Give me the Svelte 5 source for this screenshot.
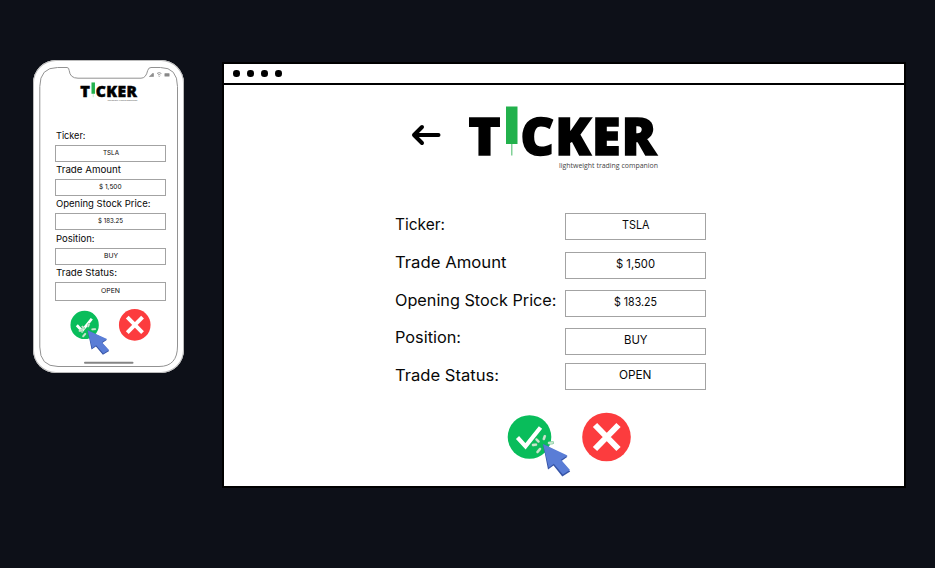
<script>
  const fields = [
    { label: 'Ticker:', value: 'TSLA', w: 50, mw: 29.5, vw: 27.5, mvw: 16, gap: 0, mh: 17 },
    { label: 'Trade Amount', value: '$ 1,500', w: 111.5, mw: 65, vw: 39, mvw: 22.5, gap: 12, mh: 17 },
    { label: 'Opening Stock Price:', value: '$ 183.25', w: 161.5, mw: 94.5, vw: 43, mvw: 25, gap: 11, mh: 17 },
    { label: 'Position:', value: 'BUY', w: 66, mw: 38.5, vw: 23.5, mvw: 14, gap: 11, mh: 17 },
    { label: 'Trade Status:', value: 'OPEN', w: 104, mw: 61, vw: 32.5, mvw: 19, gap: 8, mh: 19 }
  ];
  const tops = [145, 179, 213, 248, 282];
  const letters = [
    ['T', 468.5, 32],
    ['C', 520.5, 33.5],
    ['K', 555.3, 35.8],
    ['E', 592, 28.5],
    ['R', 621.8, 34.5]
  ];
</script>

{#snippet line(text, width, size, height, anchor)}
  <svg class="line" {width} {height} role="img" aria-label={text}>
    <text x={anchor === 'middle' ? width / 2 : 0} y={height / 2 + size * 0.36} font-size={size}
      text-anchor={anchor} textLength={width} lengthAdjust="spacingAndGlyphs">{text}</text>
  </svg>
{/snippet}

{#snippet logo()}
  <svg class="logo" viewBox="468 105 192 67" role="img" aria-label="Ticker">
    {#each letters as [letter, x, length]}
      <text class="brand" {x} y="154.700" font-size="51" textLength={length} lengthAdjust="spacingAndGlyphs">{letter}</text>
    {/each}
    <rect x="506" y="106.500" width="11.500" height="37.500" fill="#22b14c" />
    <path d="M511.800 144v11.500" stroke="#62c67e" stroke-width="1.200" />
    <text class="tagline" x="559" y="168.300" font-size="7.500" textLength="99" lengthAdjust="spacingAndGlyphs">lightweight trading companion</text>
  </svg>
{/snippet}

{#snippet actions(cursorTransform)}
  <svg class="actions" viewBox="507 411 126 68">
    <circle cx="529.500" cy="437" r="21.800" fill="#09bd5b" />
    <path d="M517.500 437.500L525.500 446.300 540.500 427.500" fill="none" stroke="#fff" stroke-width="4.200" />
    <circle cx="606.500" cy="437" r="24.300" fill="#fc3c3e" />
    <path d="M595 425l23.500 24M618.500 425L595 449" stroke="#fff" stroke-width="6" />
    <g transform={cursorTransform}>
      <g fill="none" stroke-linecap="round">
        <path d="M-10 1l3-.3M-6.500-4.500l2 2M1.800-7.800L.8-5M6-1l3.500-.3M-3 5l-2.500 3" stroke="#58b57e" stroke-width="3" />
        <path d="M-10 1l3-.3M-6.500-4.500l2 2M1.800-7.800L.8-5M6-1l3.500-.3M-3 5l-2.500 3" stroke="#c6e8cd" stroke-width="2.300" />
      </g>
      <path d="M0 0L5 25.500 10.500 21.500 19.300 32.500 27.200 27.500 18.500 17 24.500 12.800Z" fill="#3654a6" />
      <path d="M0 0L5.800 23.700 10.800 19.800 19.800 30.600 27 26 18 15.800 24.500 11.500Z" fill="#5a7dd6" />
    </g>
  </svg>
{/snippet}

<main>
  <section class="phone">
    <svg class="frame" viewBox="0 0 151 313">
      <path d="M24.500 7.500H34q2 0 2.200 3Q37 18.200 45 18.200h63q5 0 6.700-7.700 .7-3 3.300-3h9.500q17 0 17 19V286q0 20.500-18.500 20.500H25Q6.800 306.500 6.800 287V26.500Q6.800 7.500 24.500 7.500Z" fill="none" stroke="#929292" />
      <path d="M116.300 16.500h1v-1h1v-1h1v-1h1.200v3Z" fill="#888" stroke="#888" stroke-width=".6" />
      <path d="M124 13.500q2.200-1.800 4.400 0M125 15q1.200-1 2.400 0M126.200 16v.8" fill="none" stroke="#888" stroke-width=".9" />
      <rect x="131.500" y="13.200" width="5" height="3.300" rx=".5" fill="#888" />
      <rect x="51" y="301.800" width="49.500" height="2" rx="1" fill="#858585" />
    </svg>
    <div class="phone-logo">{@render logo()}</div>
    <div class="phone-form">
      {#each fields as f, i}
        <div class="field" style:height="{(tops[i + 1] ?? 316) - tops[i]}px">
          {@render line(f.label, f.mw, 9.4, 18, 'start')}
          <div class="box" style:height="{f.mh}px">{@render line(f.value, f.mvw, 6.8, 15, 'middle')}</div>
        </div>
      {/each}
    </div>
    <div class="phone-actions">{@render actions('translate(534 445) scale(1.220 1.170)')}</div>
  </section>

  <section class="window">
    <header><i></i><i></i><i></i><i></i></header>
    <div class="heading">
      <svg class="back" viewBox="0 0 30 22">
        <path d="M27.500 11H3M11 3L3 11l8 8" fill="none" stroke="#000" stroke-width="4" stroke-linecap="round" stroke-linejoin="round" />
      </svg>
      {@render logo()}
    </div>
    <div class="form">
      <div class="labels">
        {#each fields as f}
          {@render line(f.label, f.w, 15.8, 37.75, 'start')}
        {/each}
      </div>
      <div class="values">
        {#each fields as f}
          <div class="box" style:margin-top="{f.gap}px">{@render line(f.value, f.vw, 11.4, 24, 'middle')}</div>
        {/each}
      </div>
    </div>
    <div class="window-actions">{@render actions('translate(543 444)')}</div>
  </section>
</main>

<style>
  :global(body) { margin: 0; background: #0d1018; }
  main {
    box-sizing: border-box;
    width: 935px;
    height: 568px;
    padding: 60px 0 0 33px;
    display: flex;
    align-items: flex-start;
    gap: 38px;
    background: #0d1018;
    font-family: Inter, "Open Sans", sans-serif;
  }
  svg { display: block; overflow: visible; flex: none; }
  .line text { fill: #080808; }
  .brand {
    font-family: "Open Sans", sans-serif;
    font-weight: 800;
    fill: #000;
    stroke: #000;
    stroke-width: 1.600px;
  }
  .tagline { font-family: "Open Sans", sans-serif; fill: #444; }
  .phone {
    box-sizing: border-box;
    position: relative;
    width: 151px;
    height: 313px;
    border-radius: 23px;
    background: #fff;
    box-shadow: inset 0 0 0 1px #bbb;
    padding: 22px 0 0 22px;
  }
  .frame { position: absolute; inset: 0; width: 151px; height: 313px; }
  .phone-logo { width: 58px; margin-left: 24.500px; height: 45px; }
  .phone-form { width: 111px; }
  .phone-form .line { margin-left: 1.200px; }
  .phone-form .box .line { margin: -2px 0 0; }
  .box {
    box-sizing: border-box;
    display: flex;
    justify-content: center;
    align-items: center;
    border: 1px solid #a3a3a3;
  }
  .phone-actions { width: 82px; margin: 10px 0 0 14.800px; }
  .window {
    box-sizing: border-box;
    width: 684px;
    height: 426px;
    margin-top: 2px;
    background: #fff;
    border: 2px solid #000;
  }
  header {
    box-sizing: border-box;
    height: 21px;
    border-bottom: 2px solid #000;
    padding: 0 0 0 9px;
    display: flex;
    align-items: center;
    gap: 7.500px;
  }
  i { width: 6.500px; height: 6.500px; border-radius: 50%; background: #000; }
  .heading { display: flex; height: 109px; padding: 20px 0 0 187px; box-sizing: border-box; }
  .back { width: 30px; height: 22px; margin: 19px 27px 0 0; }
  .heading .logo { width: 192px; height: 67px; }
  .form { display: flex; padding-left: 171px; height: 217px; }
  .labels { width: 170px; padding-top: 11px; }
  .values { width: 141px; padding-top: 19px; }
  .values .box { height: 27px; }
  .values .line { margin-top: -2.500px; }
  .window-actions { width: 126px; padding-left: 283px; }
</style>
